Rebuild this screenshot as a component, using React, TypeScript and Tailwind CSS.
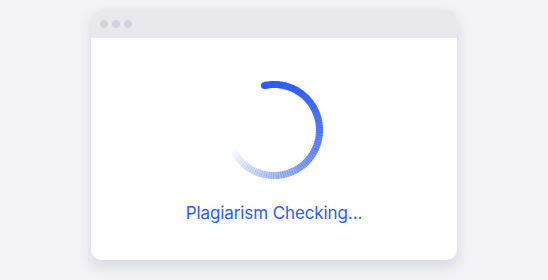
import React from "react";

const CX = 49;
const CY = 49;
const R = 45.5;
const HEAD = -12; // degrees from 12 o'clock, clockwise
const SPAN = 264;
const STEPS = 88;

function pt(deg: number) {
  const a = (deg * Math.PI) / 180;
  return [CX + R * Math.sin(a), CY - R * Math.cos(a)];
}

function Spinner() {
  const segs = [];
  for (let i = 0; i < STEPS; i++) {
    const a0 = HEAD + (SPAN * i) / STEPS;
    const a1 = HEAD + (SPAN * (i + 1)) / STEPS + 0.6;
    const [x0, y0] = pt(a0);
    const [x1, y1] = pt(a1);
    const t = i / STEPS;
    const op = Math.max(0, 1 - Math.pow(t, 1.6) * 1.05);
    segs.push(
      <path
        key={i}
        d={`M${x0} ${y0} A${R} ${R} 0 0 1 ${x1} ${y1}`}
        stroke="#2b5af5"
        strokeOpacity={op}
        strokeWidth={7}
        fill="none"
      />
    );
  }
  const [hx, hy] = pt(HEAD);
  return (
    <svg width="98" height="98" viewBox="0 0 98 98">
      {segs}
      <circle cx={hx} cy={hy} r={3.5} fill="#2b5af5" />
    </svg>
  );
}

export default function App() {
  return (
    <div className="h-[280px] w-full bg-[#f2f2f7] pt-[10px] font-['Inter',sans-serif]">
      <div className="mx-auto w-[366px] h-[250px] rounded-[10px] overflow-hidden bg-white shadow-[0_6px_14px_rgba(40,40,70,0.13)]">
        <div className="h-[28px] bg-[#e8e8ed] flex items-center gap-[4px] pl-[9px]">
          <span className="w-[8px] h-[8px] rounded-full bg-[#d3d3db]" />
          <span className="w-[8px] h-[8px] rounded-full bg-[#d3d3db]" />
          <span className="w-[8px] h-[8px] rounded-full bg-[#d3d3db]" />
        </div>
        <div className="flex flex-col items-center pt-[43px]">
          <Spinner />
          <div className="mt-[22px] text-[17px] leading-[24px] text-[#2f5cf4] tracking-[-0.1px]">
            Plagiarism Checking...
          </div>
        </div>
      </div>
    </div>
  );
}
